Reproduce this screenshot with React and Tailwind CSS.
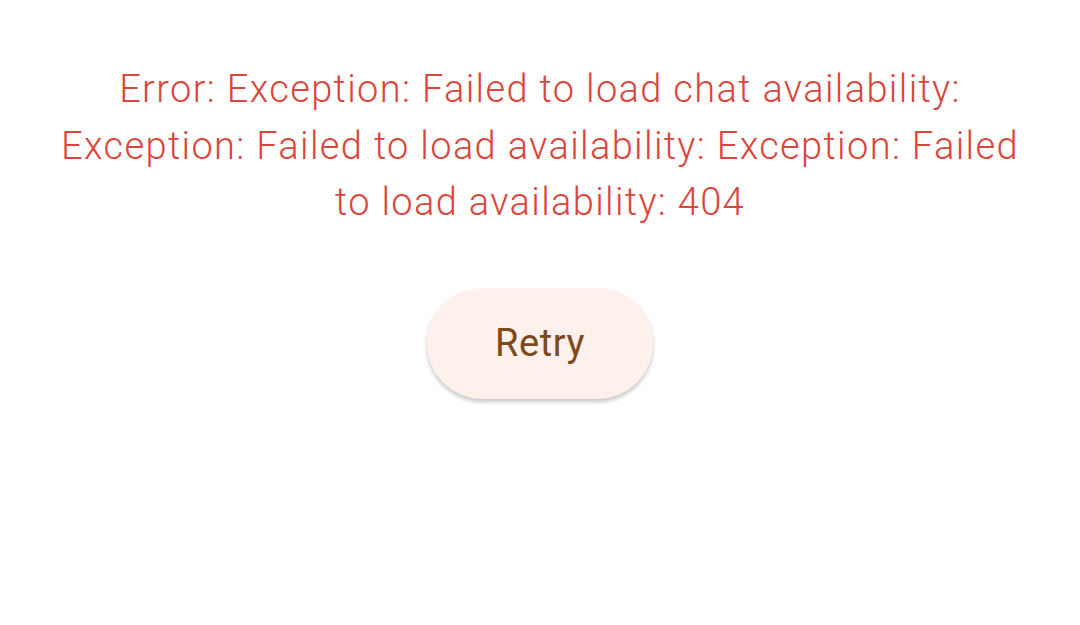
export default function App() {
  return (
    <div className="w-[1080px] h-[625px] bg-white flex flex-col items-center px-[45px] pt-[61px]" style={{ fontFamily: 'Roboto, "Noto Sans", sans-serif' }}>
      <p className="text-[38px] leading-[56.5px] font-light text-[#d9463c] text-center tracking-[1.35px]">
        Error: Exception: Failed to load chat availability: Exception: Failed to load availability: Exception: Failed to load availability: 404
      </p>
      <button className="mt-[57px] w-[226px] h-[111px] rounded-full bg-[#fef0ea] text-[#7c4a1e] text-[38px] font-normal tracking-[0.6px] shadow-[0_3px_4px_rgba(0,0,0,0.22)] flex items-center justify-center">
        Retry
      </button>
    </div>
  );
}
